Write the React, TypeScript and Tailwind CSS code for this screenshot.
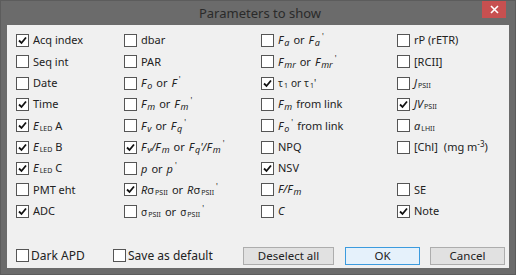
import React from 'react';

type Item = { label: React.ReactNode; checked?: boolean } | null;

const Sub = ({ children, tiny }: { children: React.ReactNode; tiny?: boolean }) => (
  <span className={tiny ? 'text-[7px] not-italic align-[-1px] ml-[1px]' : 'text-[9px] italic align-[-2px] ml-[1px]'}>
    {children}
  </span>
);

const P = () => <span className="text-[8px] align-[4px] ml-[2px]">'</span>;

const It = ({ children }: { children: React.ReactNode }) => <span className="italic">{children}</span>;

const Check: React.FC<{ checked?: boolean }> = ({ checked }) => (
  <span className="w-[13px] h-[13px] shrink-0 border border-[#555] bg-white flex items-center justify-center">
    {checked && (
      <svg width="9" height="9" viewBox="0 0 9 9">
        <path d="M1 4.5 L3.5 7 L8 1.5" stroke="#111" strokeWidth="1.8" fill="none" />
      </svg>
    )}
  </span>
);

const Box: React.FC<{ item: Item }> = ({ item }) => {
  if (!item) return <div className="h-[21.33px]" />;
  return (
    <div className="h-[21.33px] flex items-center gap-[4px] text-[#222] whitespace-nowrap">
      <Check checked={item.checked} />
      <span>{item.label}</span>
    </div>
  );
};

const or = <span className="mx-[4px]">or</span>;

const cols: Item[][] = [
  [
    { label: 'Acq index', checked: true },
    { label: 'Seq int' },
    { label: 'Date' },
    { label: 'Time', checked: true },
    { label: <><It>E</It><Sub tiny>LED</Sub> A</>, checked: true },
    { label: <><It>E</It><Sub tiny>LED</Sub> B</>, checked: true },
    { label: <><It>E</It><Sub tiny>LED</Sub> C</>, checked: true },
    { label: 'PMT eht' },
    { label: 'ADC', checked: true },
  ],
  [
    { label: 'dbar' },
    { label: 'PAR' },
    { label: <><It>F</It><Sub>o</Sub>{or}<It>F</It><P /></> },
    { label: <><It>F</It><Sub>m</Sub>{or}<It>F</It><Sub>m</Sub><P /></> },
    { label: <><It>F</It><Sub>v</Sub>{or}<It>F</It><Sub>q</Sub><P /></> },
    { label: <><It>F</It><Sub>v</Sub><It>/F</It><Sub>m</Sub>{or}<It>F</It><Sub>q</Sub><It>'/F</It><Sub>m</Sub><P /></>, checked: true },
    { label: <><It>p</It>{or}<It>p</It><P /></> },
    { label: <><It>R</It>σ<Sub tiny>PSII</Sub>{or}<It>R</It>σ<Sub tiny>PSII</Sub><P /></>, checked: true },
    { label: <><span className="text-[10px]">σ</span><Sub tiny>PSII</Sub>{or}<span className="text-[10px]">σ</span><Sub tiny>PSII</Sub><P /></> },
  ],
  [
    { label: <><It>F</It><Sub>a</Sub>{or}<It>F</It><Sub>a</Sub><P /></> },
    { label: <><It>F</It><Sub>mr</Sub>{or}<It>F</It><Sub>mr</Sub><P /></> },
    { label: <><span className="text-[10px]">τ<Sub tiny>1</Sub></span><span className="text-[10px] mx-[3px]">or</span><span className="text-[10px]">τ<Sub tiny>1</Sub>'</span></>, checked: true },
    { label: <><It>F</It><Sub>m</Sub><span className="ml-[4px]">from link</span></> },
    { label: <><It>F</It><Sub>o</Sub><P /><span className="ml-[4px]">from link</span></> },
    { label: 'NPQ' },
    { label: 'NSV', checked: true },
    { label: <It>F/F<Sub>m</Sub></It> },
    { label: <It>C</It> },
  ],
  [
    { label: 'rP (rETR)' },
    { label: '[RCII]' },
    { label: <><It>J</It><Sub tiny>PSII</Sub></> },
    { label: <><It>JV</It><Sub tiny>PSII</Sub></>, checked: true },
    { label: <><It>a</It><Sub tiny>LHII</Sub></> },
    { label: <>[Chl]<span className="ml-[6px]">(mg m<sup className="text-[8px]">-3</sup>)</span></> },
    null,
    { label: 'SE' },
    { label: 'Note', checked: true },
  ],
];

const Btn: React.FC<{ label: string; primary?: boolean; w: string }> = ({ label, primary, w }) => (
  <button
    className={`${w} h-[18px] flex items-center justify-center text-[11.5px] text-[#222] border ${primary ? 'border-[#3c9bde] bg-[#e5f1fb]' : 'border-[#adadad] bg-[#e1e1e1]'}`}
  >
    {label}
  </button>
);

export default function App() {
  return (
    <div
      className="w-[516px] h-[275px] bg-[#6b6b6b] flex flex-col border border-[#5c5c5c]"
      style={{ fontFamily: '"Segoe UI", "Noto Sans", "Open Sans", sans-serif' }}
    >
      <div className="h-[24px] flex items-start relative">
        <div className="flex-1 text-center text-[13px] text-[#2a2a2a] pt-[3px] pl-[4px]">Parameters to show</div>
        <div className="absolute right-[9px] top-0 w-[24px] h-[17px] bg-[#c75050] flex items-center justify-center">
          <svg width="9" height="9" viewBox="0 0 9 9">
            <path d="M1 1 L8 8 M8 1 L1 8" stroke="#fff" strokeWidth="1.6" />
          </svg>
        </div>
      </div>
      <div className="mx-[6px] h-[243px] bg-[#f0f0f0] text-[11px] flex flex-col pl-[9px] pt-[5px]">
        <div className="flex">
          {cols.map((col, i) => (
            <div key={i} className={i === 0 ? 'w-[108px]' : i === 1 ? 'w-[137px]' : i === 2 ? 'w-[136px]' : 'flex-1'}>
              {col.map((it, j) => (
                <Box key={j} item={it} />
              ))}
            </div>
          ))}
        </div>
        <div className="flex items-center mt-[25px]">
          <div className="w-[97px] flex items-center gap-[2px]">
            <Check />
            <span className="text-[12px] text-[#222]">Dark APD</span>
          </div>
          <div className="w-[130px] flex items-center gap-[2px]">
            <Check />
            <span className="text-[12px] text-[#222]">Save as default</span>
          </div>
          <Btn label="Deselect all" w="w-[91px]" />
          <div className="w-[11px]" />
          <Btn label="OK" primary w="w-[75px]" />
          <div className="w-[10px]" />
          <Btn label="Cancel" w="w-[75px]" />
        </div>
      </div>
    </div>
  );
}
